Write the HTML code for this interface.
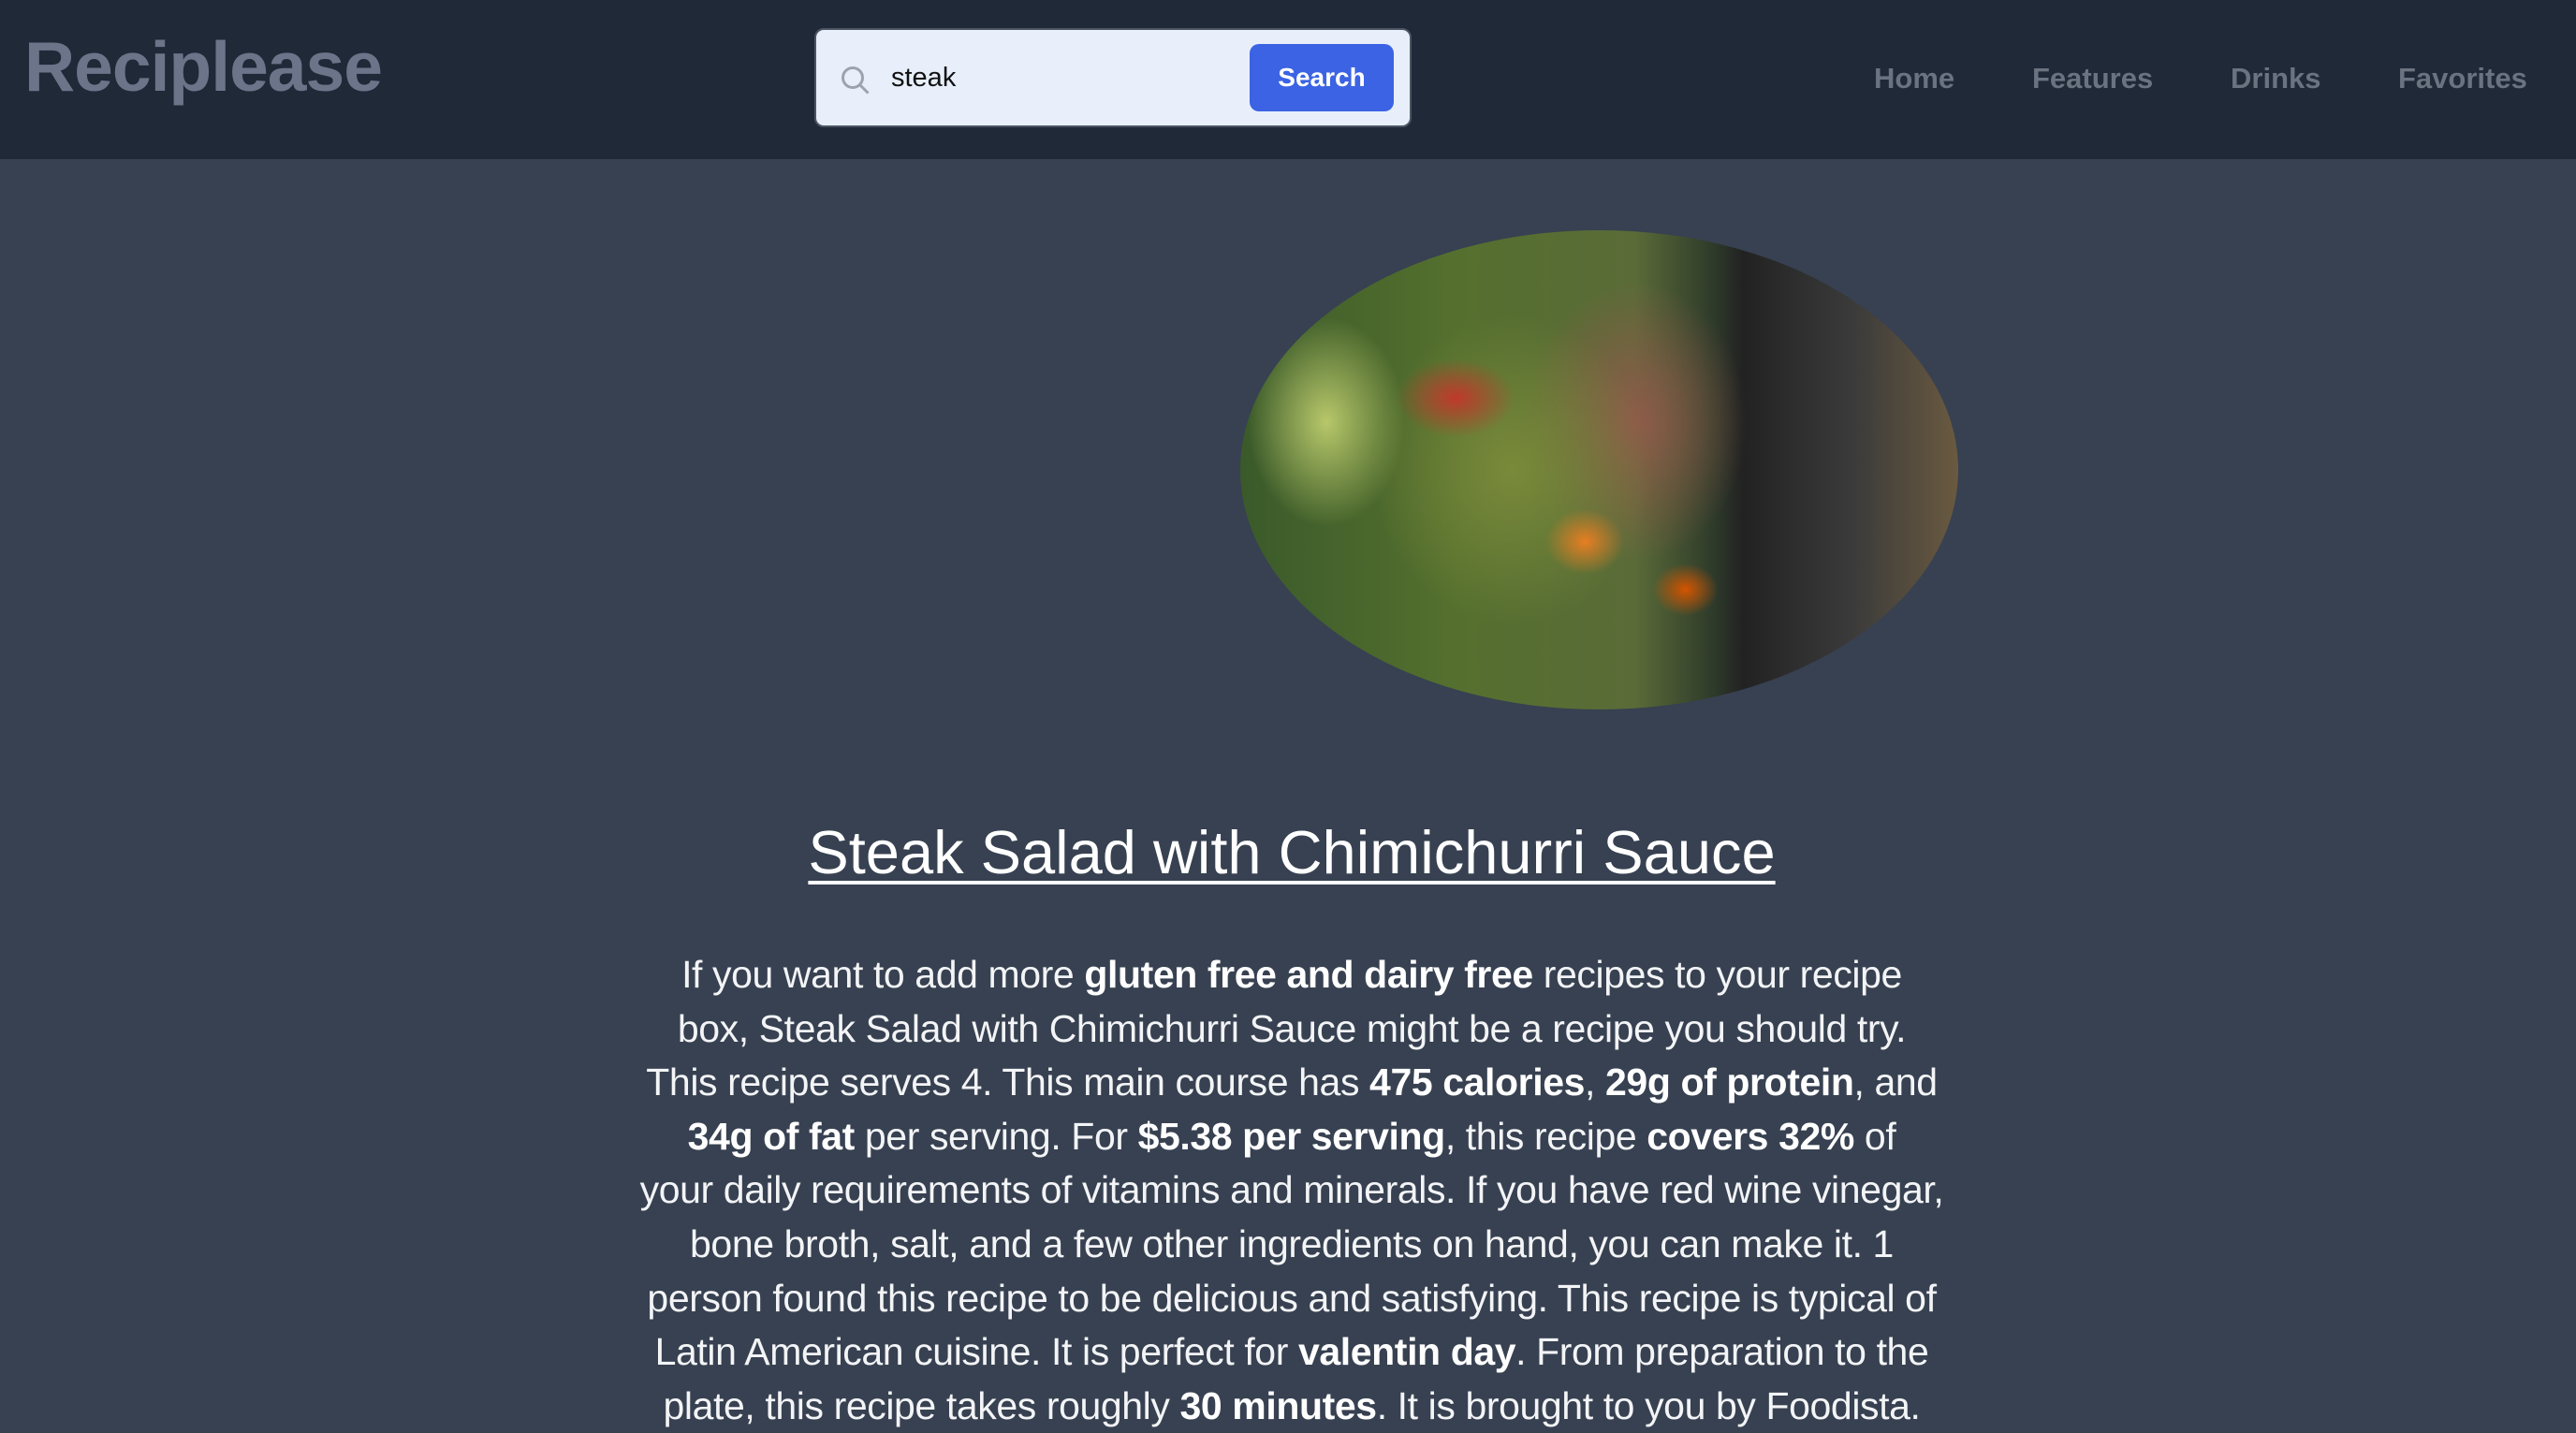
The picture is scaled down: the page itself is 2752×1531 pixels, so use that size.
<!DOCTYPE html>
<html><head><meta charset="utf-8"><style>
html,body{margin:0;padding:0}
body{width:2752px;height:1522px;overflow:hidden;background:#374151;font-family:"Liberation Sans",sans-serif;position:relative}
.hdr{position:absolute;left:0;top:0;width:2752px;height:170px;background:#1f2937}
.logo{position:absolute;left:26px;top:28px;font-size:75px;font-weight:bold;color:#6b7489;letter-spacing:-1px}
.search{position:absolute;left:870px;top:30px;width:638px;height:106px;background:#e8effb;border:2px solid #4b5563;border-radius:10px;box-sizing:border-box}
.search .q{position:absolute;left:80px;top:35px;font-size:29px;color:#111}
.search .btn{position:absolute;left:463px;top:15px;width:154px;height:72px;background:#3b63e3;border-radius:10px;color:#fff;font-size:28px;font-weight:bold;text-align:center;line-height:72px}
.nav{position:absolute;top:66px;font-size:31px;font-weight:bold;color:#6b7280}
.img{position:absolute;left:1325px;top:246px;width:767px;height:512px;border-radius:50%;overflow:hidden;
background:
radial-gradient(ellipse 90px 60px at 30% 35%,#c0392b 0,transparent 70%),
radial-gradient(ellipse 60px 50px at 48% 65%,#e67e22 0,transparent 70%),
radial-gradient(ellipse 50px 40px at 62% 75%,#d35400 0,transparent 70%),
radial-gradient(ellipse 120px 160px at 12% 40%,#b7c76a 0,transparent 70%),
radial-gradient(ellipse 200px 220px at 38% 50%,#7a8a3a 0,transparent 75%),
radial-gradient(ellipse 160px 200px at 55% 40%,#8f5a4a 0,transparent 75%),
linear-gradient(90deg,#3a5a2a 0%,#55702e 30%,#5a6b38 55%,#2e3a2a 66%,#222 70%,#3a3a3a 85%,#6a5a40 100%)}
h1{position:absolute;left:0;width:2752px;top:873px;margin:0;text-align:center;font-size:65px;font-weight:normal;color:#fff;text-decoration:underline;text-decoration-thickness:4px;text-underline-offset:8px;padding-left:4px}
.p{position:absolute;left:0;width:2752px;top:1013px;text-align:center;font-size:41px;line-height:57.6px;color:#f3f4f6;white-space:nowrap;letter-spacing:-0.4px;padding-left:4px}
b{font-weight:bold;color:#fff}
</style></head><body>
<div class="hdr">
<div class="logo">Reciplease</div>
<div class="search">
<svg style="position:absolute;left:24px;top:36px" width="36" height="36" viewBox="0 0 24 24" fill="none" stroke="#9ca3af" stroke-width="2"><circle cx="10" cy="10" r="7"/><path d="M15 15l6 6"/></svg>
<div class="q">steak</div>
<div class="btn">Search</div>
</div>
<div class="nav" style="left:2002px">Home</div>
<div class="nav" style="left:2171px">Features</div>
<div class="nav" style="left:2383px">Drinks</div>
<div class="nav" style="left:2562px">Favorites</div>
</div>
<div class="img"></div>
<h1>Steak Salad with Chimichurri Sauce</h1>
<div class="p">If you want to add more <b>gluten free and dairy free</b> recipes to your recipe<br>box, Steak Salad with Chimichurri Sauce might be a recipe you should try.<br>This recipe serves 4. This main course has <b>475 calories</b>, <b>29g of protein</b>, and<br><b>34g of fat</b> per serving. For <b>$5.38 per serving</b>, this recipe <b>covers 32%</b> of<br>your daily requirements of vitamins and minerals. If you have red wine vinegar,<br>bone broth, salt, and a few other ingredients on hand, you can make it. 1<br>person found this recipe to be delicious and satisfying. This recipe is typical of<br>Latin American cuisine. It is perfect for <b>valentin day</b>. From preparation to the<br>plate, this recipe takes roughly <b>30 minutes</b>. It is brought to you by Foodista.</div>
</body></html>
